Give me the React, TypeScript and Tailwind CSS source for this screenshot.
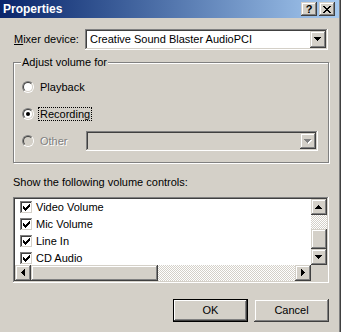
import React from "react";

const raised =
  "shadow-[inset_-1px_-1px_#404040,inset_1px_1px_#d4d0c8,inset_-2px_-2px_#808080,inset_2px_2px_#ffffff]";
const sunken =
  "shadow-[inset_-1px_-1px_#ffffff,inset_1px_1px_#808080,inset_-2px_-2px_#d4d0c8,inset_2px_2px_#404040]";

type Dir = "up" | "down" | "left" | "right";

const arrowRects: Record<Dir, number[][]> = {
  down: [[0, 0, 7, 1], [1, 1, 5, 1], [2, 2, 3, 1], [3, 3, 1, 1]],
  up: [[3, 0, 1, 1], [2, 1, 3, 1], [1, 2, 5, 1], [0, 3, 7, 1]],
  left: [[0, 3, 1, 1], [1, 2, 1, 3], [2, 1, 1, 5], [3, 0, 1, 7]],
  right: [[0, 0, 1, 7], [1, 1, 1, 5], [2, 2, 1, 3], [3, 3, 1, 1]],
};

const Arrow = ({ dir, disabled }: { dir: Dir; disabled?: boolean }) => {
  const vertical = dir === "up" || dir === "down";
  const w = vertical ? 7 : 4;
  const h = vertical ? 4 : 7;
  return (
    <svg width={w + 1} height={h + 1} shapeRendering="crispEdges">
      {disabled &&
        arrowRects[dir].map(([x, y, rw, rh], i) => (
          <rect key={"s" + i} x={x + 1} y={y + 1} width={rw} height={rh} fill="#ffffff" />
        ))}
      {arrowRects[dir].map(([x, y, rw, rh], i) => (
        <rect key={i} x={x} y={y} width={rw} height={rh} fill={disabled ? "#808080" : "#000000"} />
      ))}
    </svg>
  );
};

const ScrollBtn = ({ dir }: { dir: Dir }) => (
  <div className={`w-[16px] h-[16px] shrink-0 bg-[#d4d0c8] flex items-center justify-center ${raised}`}>
    <Arrow dir={dir} />
  </div>
);

const CloseGlyph = () => {
  const rows = ["XX....XX", ".XX..XX.", "..XXXX..", "...XX...", "..XXXX..", ".XX..XX.", "XX....XX"];
  return (
    <svg width="8" height="7" shapeRendering="crispEdges">
      {rows.map((r, y) =>
        r.split("").map((c, x) =>
          c === "X" ? <rect key={`${x}-${y}`} x={x} y={y} width="1" height="1" fill="#000" /> : null
        )
      )}
    </svg>
  );
};

const Check = () => {
  const starts = [2, 3, 4, 3, 2, 1, 0];
  return (
    <svg width="7" height="7" shapeRendering="crispEdges">
      {starts.map((s, x) => (
        <rect key={x} x={x} y={s} width="1" height="3" fill="#000" />
      ))}
    </svg>
  );
};

const Radio = ({ checked, disabled }: { checked?: boolean; disabled?: boolean }) => (
  <div className="w-[12px] h-[12px] shrink-0 rounded-full border border-t-[#808080] border-l-[#808080] border-b-white border-r-white">
    <div
      className={`w-[10px] h-[10px] rounded-full border border-t-[#404040] border-l-[#404040] border-b-[#d4d0c8] border-r-[#d4d0c8] flex items-center justify-center ${
        disabled ? "bg-[#d4d0c8]" : "bg-white"
      }`}
    >
      {checked && <div className="w-[4px] h-[4px] rounded-full bg-black" />}
    </div>
  </div>
);

const items = ["Video Volume", "Mic Volume", "Line In", "CD Audio"];

export default function App() {
  return (
    <div className="w-[341px] h-[332px] overflow-hidden bg-[#d4d0c8] font-['Liberation_Sans',Arial,sans-serif] text-[11px] text-black shadow-[inset_-1px_0_#404040,inset_-2px_0_#808080]">
      {/* title bar */}
      <div className="w-[339px] h-[18px] flex items-center pl-[3px] pr-[4px] bg-linear-to-r from-[#0a246a] to-[#a6caf0]">
        <span className="flex-1 text-white font-bold text-[12px] leading-[18px]">Properties</span>
        <div className="flex gap-[2px]">
          <div className={`w-[16px] h-[14px] bg-[#d4d0c8] flex items-center justify-center font-bold text-[11px] leading-none ${raised}`}>
            ?
          </div>
          <div className={`w-[16px] h-[14px] bg-[#d4d0c8] flex items-center justify-center ${raised}`}>
            <CloseGlyph />
          </div>
        </div>
      </div>

      <div className="w-[339px] pl-[13px] pr-[10px]">
        {/* mixer device */}
        <div className="mt-[11px] h-[21px] flex items-center">
          <label className="w-[72px] pl-[1px]">
            <span className="underline">M</span>ixer device:
          </label>
          <div className={`flex-1 mr-[1px] h-[21px] bg-white p-[2px] flex items-center ${sunken}`}>
            <span className="flex-1 pl-[3px]">Creative Sound Blaster AudioPCI</span>
            <div className={`w-[16px] h-[17px] bg-[#d4d0c8] flex items-center justify-center ${raised}`}>
              <Arrow dir="down" />
            </div>
          </div>
        </div>

        {/* adjust volume group */}
        <div className="relative mt-[12px] h-[101px] border border-[#808080] shadow-[inset_1px_1px_#ffffff,1px_1px_#ffffff]">
          <span className="absolute left-[7px] top-[-8px] px-[1px] bg-[#d4d0c8] leading-[14px]">Adjust volume for</span>
          <div className="pt-[14px] pl-[8px] pr-[10px] flex flex-col gap-[7px]">
            <div className="h-[20px] flex items-center">
              <Radio />
              <span className="ml-[4px] px-[1px] border border-dotted border-transparent leading-[12px]">Playback</span>
            </div>
            <div className="h-[20px] flex items-center">
              <Radio checked />
              <span className="ml-[4px] px-[1px] border border-dotted border-black leading-[12px]">Recording</span>
            </div>
            <div className="h-[20px] flex items-center">
              <Radio disabled />
              <div className="w-[52px]">
                <span className="ml-[4px] px-[1px] border border-transparent leading-[12px] text-[#808080] [text-shadow:1px_1px_0_#ffffff]">
                  Other
                </span>
              </div>
              <div className={`flex-1 h-[20px] bg-[#d4d0c8] p-[2px] flex justify-end ${sunken}`}>
                <div className={`w-[16px] h-[16px] bg-[#d4d0c8] flex items-center justify-center ${raised}`}>
                  <Arrow dir="down" disabled />
                </div>
              </div>
            </div>
          </div>
        </div>

        <div className="mt-[12px] leading-[14px]">Show the following volume controls:</div>

        {/* list */}
        <div className={`mt-[8px] h-[86px] bg-white p-[2px] flex flex-col ${sunken}`}>
          <div className="h-[66px] flex">
            <div className="flex-1 overflow-hidden">
              {items.map((t) => (
                <div key={t} className="h-[17px] shrink-0 flex items-center pl-[5px] gap-[3px]">
                  <div className={`w-[13px] h-[13px] bg-white flex items-center justify-center ${sunken}`}>
                    <Check />
                  </div>
                  <span>{t}</span>
                </div>
              ))}
            </div>
            <div className="w-[16px] flex flex-col">
              <ScrollBtn dir="up" />
              <div className="h-[14px] bg-[repeating-conic-gradient(#d4d0c8_0%_25%,#ffffff_0%_50%)] bg-[length:2px_2px]" />
              <div className={`h-[20px] bg-[#d4d0c8] ${raised}`} />
              <ScrollBtn dir="down" />
            </div>
          </div>
          <div className="h-[16px] flex">
            <div className="flex-1 flex">
              <ScrollBtn dir="left" />
              <div className={`w-[127px] bg-[#d4d0c8] ${raised}`} />
              <div className="flex-1 bg-[repeating-conic-gradient(#d4d0c8_0%_25%,#ffffff_0%_50%)] bg-[length:2px_2px]" />
              <ScrollBtn dir="right" />
            </div>
            <div className="w-[16px] bg-[#d4d0c8]" />
          </div>
        </div>

        {/* buttons */}
        <div className="mt-[16px] flex justify-end gap-[6px]">
          <button className="w-[75px] h-[23px] border border-black bg-[#d4d0c8] shadow-[inset_-1px_-1px_#404040,inset_1px_1px_#ffffff,inset_-2px_-2px_#808080]">
            OK
          </button>
          <button className={`w-[75px] h-[23px] bg-[#d4d0c8] ${raised}`}>Cancel</button>
        </div>
      </div>
    </div>
  );
}
